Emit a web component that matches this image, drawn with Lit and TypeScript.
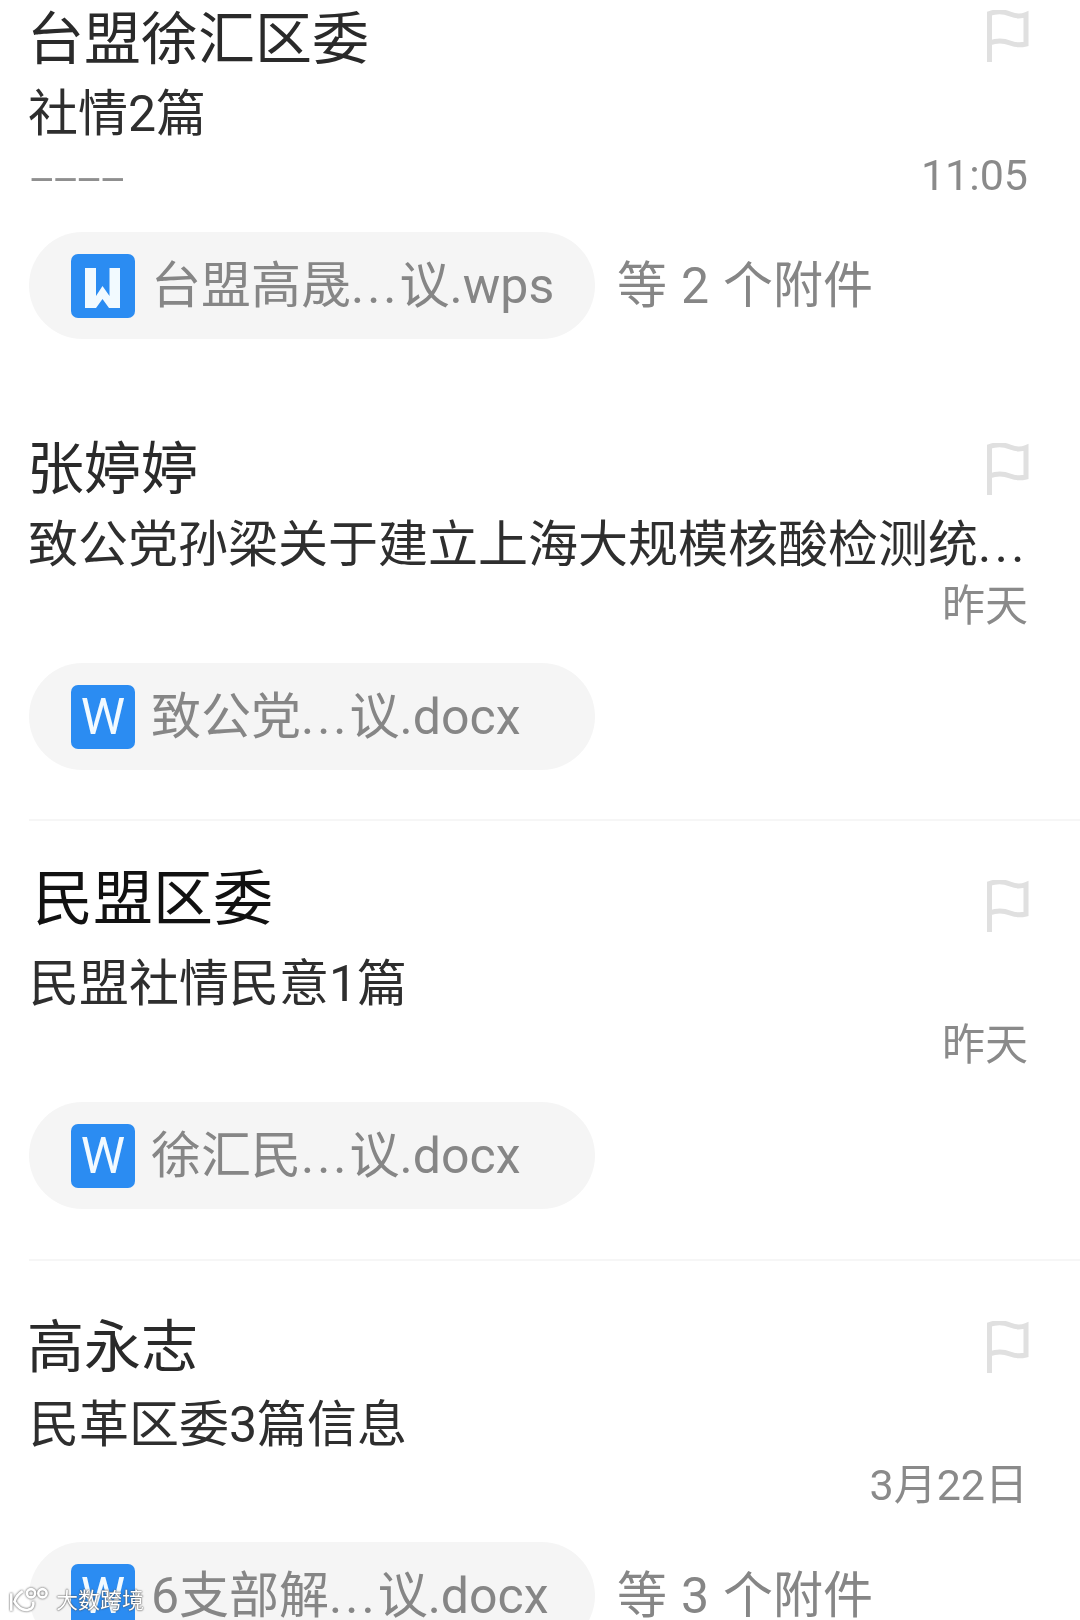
import { LitElement, html, css } from "lit";
import { customElement } from "lit/decorators.js";

interface Mail {
  variant: string;
  title: string;
  subject: string;
  preview?: string;
  time: string;
  file: string;
  wps?: boolean;
  more?: string;
}

const MAILS: Mail[] = [
  { variant: "first", title: "台盟徐汇区委", subject: "社情2篇", preview: "----", time: "11:05", file: "台盟高晟...议.wps", wps: true, more: "等 2 个附件" },
  { variant: "second", title: "张婷婷", subject: "致公党孙梁关于建立上海大规模核酸检测统...", time: "昨天", file: "致公党...议.docx" },
  { variant: "third", title: "民盟区委", subject: "民盟社情民意1篇", time: "昨天", file: "徐汇民...议.docx" },
  { variant: "fourth", title: "高永志", subject: "民革区委3篇信息", time: "3月22日", file: "6支部解...议.docx", more: "等 3 个附件" },
];

@customElement("app-root")
export class AppRoot extends LitElement {
  static styles = css`
    :host {
      display: block;
      position: relative;
      width: 1080px;
      height: 1620px;
      overflow: hidden;
      background: #fff;
      font-family: Roboto, "Noto Sans CJK SC", sans-serif;
    }
    .list {
      filter: blur(0.6px);
    }
    .mail {
      margin-left: 29px;
      padding: 51px 52px 50px 1px;
      border-bottom: 2px solid #f6f6f6;
    }
    .mail.first {
      padding-top: 4px;
      padding-bottom: 42px;
      border-bottom: 0;
    }
    .mail.second {
      padding-top: 53px;
      padding-bottom: 49px;
    }
    .mail.third {
      padding-top: 43px;
    }
    .head {
      display: flex;
      align-items: center;
      justify-content: space-between;
      height: 72px;
    }
    .title {
      margin-left: -3px;
      font-size: 57px;
      line-height: 72px;
      color: #2a2a2a;
    }
    .third .title {
      margin-left: 3px;
      font-size: 60px;
      color: #111;
    }
    .flag {
      width: 43px;
      height: 52px;
      flex: none;
      margin-right: -1px;
    }
    .first .flag {
      margin-bottom: 8px;
    }
    .second .flag,
    .fourth .flag {
      margin-bottom: 2px;
    }
    .third .flag {
      margin-top: 12px;
    }
    .subject {
      margin-top: 4px;
      margin-left: -2px;
      font-size: 50px;
      line-height: 72px;
      color: #2e2e2e;
      white-space: nowrap;
    }
    .first .subject {
      margin-top: 2px;
    }
    .second .subject {
      margin-top: 3px;
    }
    .third .subject {
      margin-top: 12px;
      margin-left: -1px;
    }
    .fourth .subject {
      margin-top: 5px;
      margin-left: -1px;
    }
    .subject .dots {
      letter-spacing: 3.5px;
    }
    .meta {
      display: flex;
      justify-content: space-between;
      align-items: center;
      height: 48px;
      margin-top: 1px;
    }
    .fourth .meta {
      margin-top: 0;
    }
    .preview {
      font-size: 38px;
      line-height: 48px;
      color: #8f8f8f;
      transform-origin: left center;
      transform: translateY(3px) scaleX(2.25);
    }
    .time {
      margin-left: auto;
      font-size: 43px;
      line-height: 48px;
      color: #8a8a8a;
    }
    .files {
      display: flex;
      align-items: center;
      gap: 22px;
      margin-top: 33px;
      margin-left: -1px;
    }
    .chip {
      display: flex;
      align-items: center;
      gap: 16px;
      box-sizing: border-box;
      width: 566px;
      height: 107px;
      padding-left: 42px;
      border-radius: 54px;
      background: #f5f5f5;
    }
    .file-icon {
      display: flex;
      align-items: center;
      justify-content: center;
      flex: none;
      width: 64px;
      height: 64px;
      border-radius: 7px;
      background: #2b8cf2;
      color: #f2faff;
      font-size: 50px;
      line-height: 64px;
    }
    .file-icon svg {
      width: 64px;
      height: 64px;
    }
    .file-name,
    .more {
      font-size: 50px;
      line-height: 64px;
      color: #868686;
      white-space: nowrap;
    }
    .file-name .dots {
      letter-spacing: 3px;
    }
    .more {
      word-spacing: 1.5px;
    }
    .watermark {
      position: absolute;
      left: 8px;
      bottom: 6px;
      display: flex;
      align-items: center;
      gap: 4px;
      color: #fff;
      font-size: 22px;
      line-height: 26px;
      text-shadow: 0 0 2px rgba(70, 70, 70, 1), 0 0 1px rgba(70, 70, 70, 1);
      filter: blur(0.4px);
    }
    .watermark svg {
      width: 44px;
      height: 27px;
      filter: drop-shadow(0 0 1px rgba(70, 70, 70, 1));
    }
  `;

  private flag() {
    return html`<svg class="flag" viewBox="0 0 43 52" fill="none" stroke="#e0e0e0" stroke-width="5">
      <path d="M3.5 52V3.5C11 1 18 1.5 24 4C30 6.5 35 6.5 40 4.5V34C34 35.5 30 35.5 24 33C18 30.5 11 30 3.5 33"></path>
    </svg>`;
  }

  private wpsIcon() {
    return html`<svg viewBox="0 0 64 64">
      <path fill="#f2faff" d="M14 14H25V42L31.500 32L38.500 42V14H49V54H38L31.500 45L25 54H14Z"></path>
    </svg>`;
  }

  private withDots(text: string) {
    const i = text.indexOf("...");
    if (i < 0) return text;
    return html`${text.slice(0, i)}<span class="dots">...</span>${text.slice(i + 3)}`;
  }

  private renderMail(m: Mail) {
    return html`<article class="mail ${m.variant}">
      <div class="head">
        <div class="title">${m.title}</div>
        ${this.flag()}
      </div>
      <div class="subject">${this.withDots(m.subject)}</div>
      <div class="meta">
        ${m.preview ? html`<div class="preview">${m.preview}</div>` : ""}
        <div class="time">${m.time}</div>
      </div>
      <div class="files">
        <div class="chip">
          <div class="file-icon">${m.wps ? this.wpsIcon() : "W"}</div>
          <div class="file-name">${this.withDots(m.file)}</div>
        </div>
        ${m.more ? html`<div class="more">${m.more}</div>` : ""}
      </div>
    </article>`;
  }

  render() {
    return html`
      <div class="list">${MAILS.map((m) => this.renderMail(m))}</div>
      <div class="watermark">
        <svg viewBox="0 0 42 26" fill="none" stroke="#fff" stroke-width="2.500">
          <path d="M3 6V23"></path>
          <path d="M14 4C9 7 7 11 6 14C9 19 13 23 19 22C24 21 25 17 24 14"></path>
          <circle cx="22" cy="6" r="4"></circle>
          <circle cx="33" cy="6" r="4"></circle>
        </svg>
        <span>大数跨境</span>
      </div>
    `;
  }
}
